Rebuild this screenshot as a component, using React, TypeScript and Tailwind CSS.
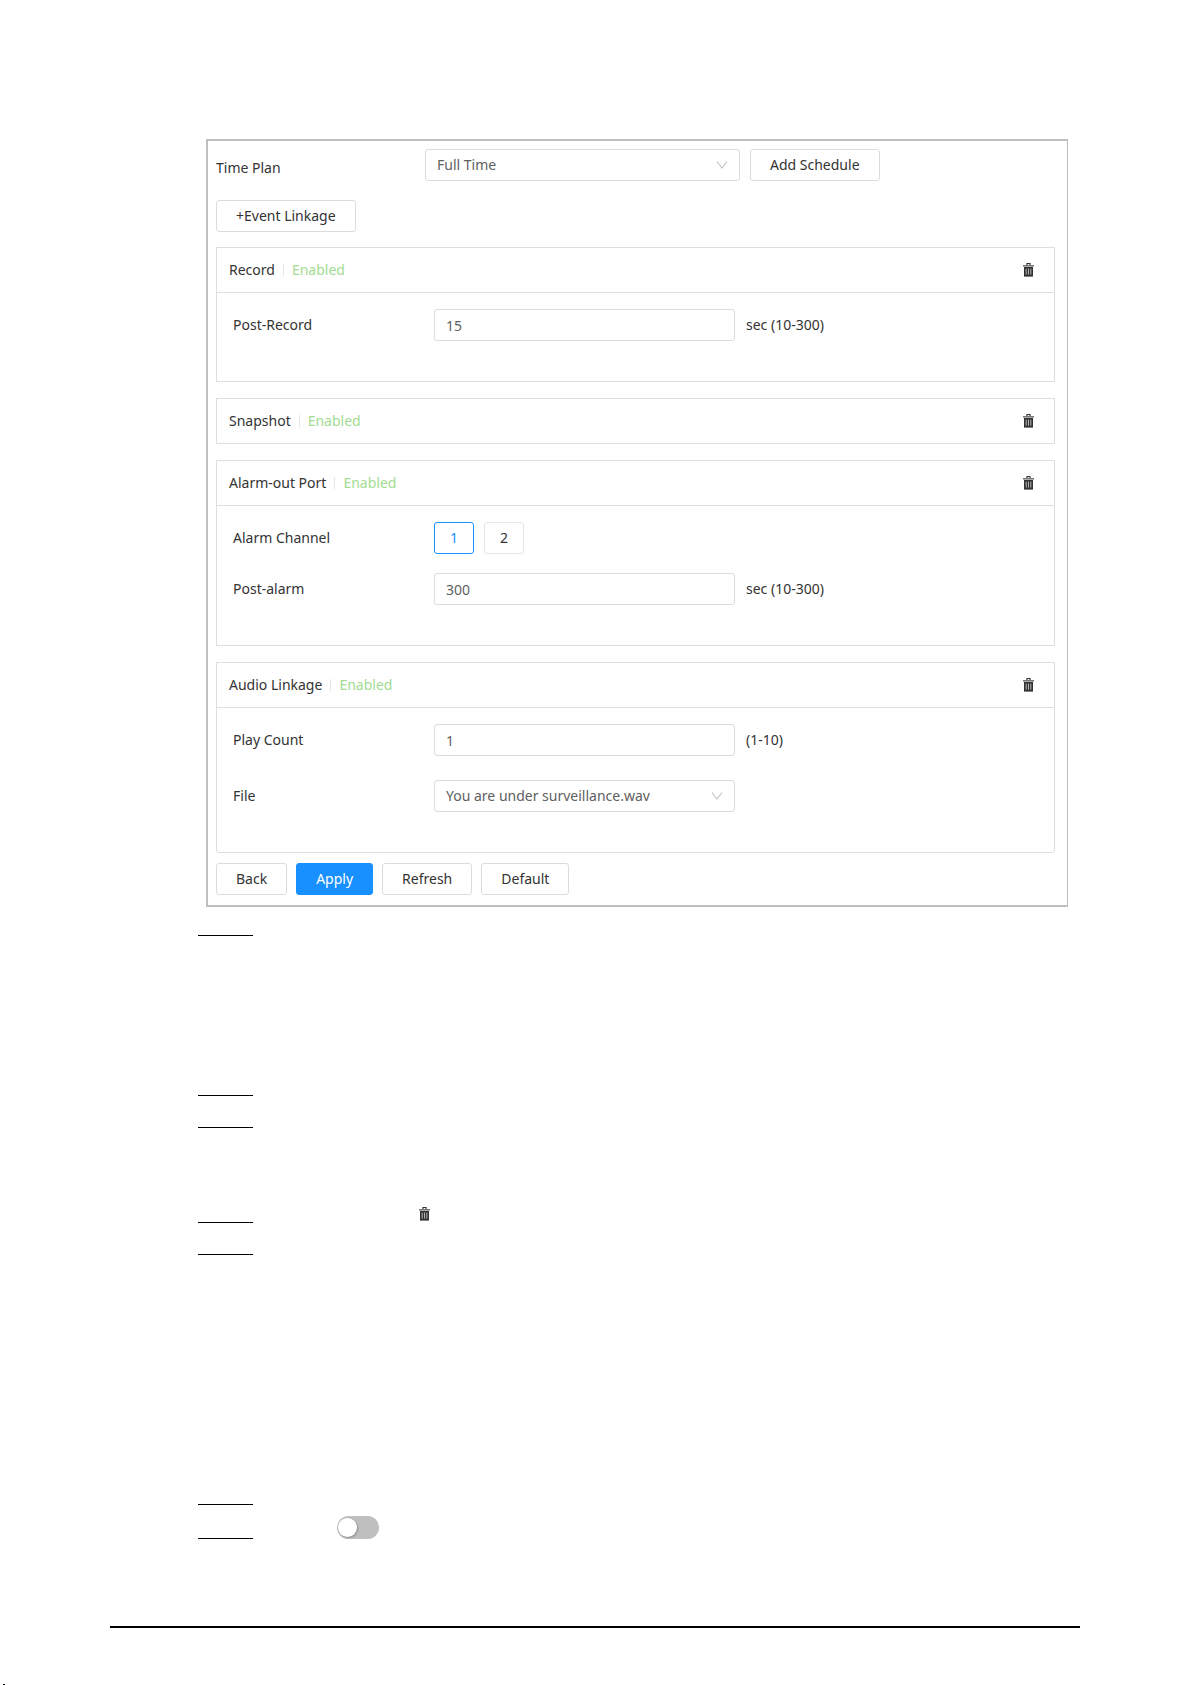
import type { ReactNode } from "react";

const control =
  "h-8 rounded-[3px] border border-[#dcdcdc] bg-white text-[#606060] outline-none";

function TrashIcon() {
  return (
    <svg width="11" height="14" viewBox="0 0 11 14" aria-hidden="true">
      <path d="M4 2V0.5h3V2" fill="none" stroke="#333" strokeWidth="1.2" />
      <rect x="0" y="2" width="11" height="1.6" fill="#777" />
      <path d="M1 4h9v9.6H1z" fill="#333" />
      <path d="M3.2 5.6v6M5.5 5.6v6M7.8 5.6v6" stroke="#b5b5b5" strokeWidth="1" />
    </svg>
  );
}

function Button({ children, primary = false }: { children: ReactNode; primary?: boolean }) {
  return (
    <button
      type="button"
      className={
        primary
          ? "h-8 rounded-[3px] border border-[#1890ff] bg-[#1890ff] px-[19px] text-white"
          : "h-8 rounded-[3px] border border-[#dcdcdc] bg-white px-[19px] text-[#333]"
      }
    >
      {children}
    </button>
  );
}

function Select({ id, value, width }: { id: string; value: string; width: string }) {
  return (
    <div className={`relative ${width}`}>
      <select id={id} className={`${control} w-full appearance-none px-[11px]`} defaultValue={value}>
        <option>{value}</option>
      </select>
      <svg
        className="pointer-events-none absolute top-3 right-3"
        width="12"
        height="8"
        viewBox="0 0 12 8"
        aria-hidden="true"
      >
        <path d="M1 0.5l5 6.5 5-6.5" fill="none" stroke="#c4c4c4" strokeWidth="1.2" />
      </svg>
    </div>
  );
}

function Row({ label, id, children }: { label: string; id?: string; children: ReactNode }) {
  return (
    <div className="flex items-center">
      <label htmlFor={id} className="w-[201px] shrink-0">
        {label}
      </label>
      {children}
    </div>
  );
}

function NumberField({ id, value, hint }: { id: string; value: string; hint: string }) {
  return (
    <>
      <input id={id} inputMode="numeric" defaultValue={value} className={`${control} w-[301px] px-[11px]`} />
      <span className="ml-[11px]">{hint}</span>
    </>
  );
}

function Card({ title, className = "", children }: { title: string; className?: string; children?: ReactNode }) {
  return (
    <section className={`border border-[#dedede] ${className}`}>
      <header className="flex h-11 items-center pr-5 pl-3">
        <h2>{title}</h2>
        <span className="mr-2 ml-2 h-3 w-px bg-[#e6e6e6]" />
        <span className="text-[#a3dc92]">Enabled</span>
        <button type="button" aria-label={`Delete ${title}`} className="ml-auto">
          <TrashIcon />
        </button>
      </header>
      {children && <div className="flex flex-col border-t border-[#dedede] px-4 pt-4 pb-10">{children}</div>}
    </section>
  );
}

function Step({ className, children }: { className: string; children?: ReactNode }) {
  return (
    <li className={`flex items-end ${className}`}>
      <span className="w-[55px] border-b border-black" />
      {children}
    </li>
  );
}

export default function App() {
  return (
    <div className="bg-white font-['Noto_Sans',sans-serif] text-[14px] leading-5 text-[#333]">
      <main className="pt-[139px] pr-[124px] pl-[206px]">
        <form className="border-y-2 border-r border-l-2 border-[#bfbfbf] pt-2 pr-3 pb-[10px] pl-2">
          <div className="flex items-center">
            <label htmlFor="plan" className="w-[209px] shrink-0 pt-[6px]">
              Time Plan
            </label>
            <Select id="plan" value="Full Time" width="w-[315px] mr-[10px]" />
            <Button>Add Schedule</Button>
          </div>
          <div className="mt-[19px] mb-[15px]">
            <Button>+Event Linkage</Button>
          </div>

          <Card title="Record">
            <Row label="Post-Record" id="post-record">
              <NumberField id="post-record" value="15" hint="sec (10-300)" />
            </Row>
          </Card>

          <Card title="Snapshot" className="mt-4" />

          <Card title="Alarm-out Port" className="mt-4">
            <Row label="Alarm Channel">
              <button type="button" className="h-8 w-10 rounded-[3px] border border-[#1890ff] text-[#1890ff]">
                1
              </button>
              <button type="button" className="ml-[10px] h-8 w-10 rounded-[3px] border border-[#e6e6e6]">
                2
              </button>
            </Row>
            <div className="mt-[19px]">
              <Row label="Post-alarm" id="post-alarm">
                <NumberField id="post-alarm" value="300" hint="sec (10-300)" />
              </Row>
            </div>
          </Card>

          <Card title="Audio Linkage" className="mt-4 rounded-b-[3px]">
            <Row label="Play Count" id="play-count">
              <NumberField id="play-count" value="1" hint="(1-10)" />
            </Row>
            <div className="mt-6">
              <Row label="File" id="file">
                <Select id="file" value="You are under surveillance.wav" width="w-[301px]" />
              </Row>
            </div>
          </Card>

          <div className="mt-[10px] flex gap-[9px]">
            <Button>Back</Button>
            <Button primary>Apply</Button>
            <Button>Refresh</Button>
            <Button>Default</Button>
          </div>
        </form>

        <ol className="-ml-2">
          <Step className="h-[29px]" />
          <Step className="h-[160px]" />
          <Step className="h-8" />
          <Step className="h-[95px]">
            <span className="mb-[2px] ml-[166px]">
              <TrashIcon />
            </span>
          </Step>
          <Step className="h-8" />
          <Step className="h-[250px]" />
          <Step className="h-[34px]">
            <button
              type="button"
              role="switch"
              aria-checked="false"
              aria-label="Enable"
              className="ml-[84px] flex h-[23px] w-[42px] items-center rounded-full bg-[#bfbfbf] px-px"
            >
              <span className="size-[19px] rounded-full bg-white shadow-[1px_1px_2px_rgba(0,0,0,0.25)]" />
            </button>
          </Step>
        </ol>
      </main>
      <footer className="pt-[87px]">
        <hr className="mr-[112px] ml-[110px] border-t-2 border-black" />
        <div className="mt-14 ml-[3px] h-px w-[2px] bg-black" />
      </footer>
    </div>
  );
}
